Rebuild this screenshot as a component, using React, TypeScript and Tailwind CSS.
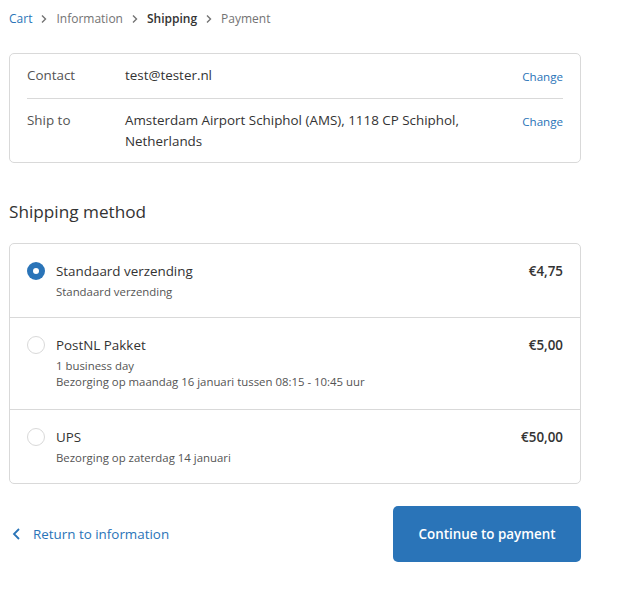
import React from 'react';

const methods = [
  { name: 'Standaard verzending', lines: ['Standaard verzending'], price: '€4,75', checked: true },
  { name: 'PostNL Pakket', lines: ['1 business day', 'Bezorging op maandag 16 januari tussen 08:15 - 10:45 uur'], price: '€5,00' },
  { name: 'UPS', lines: ['Bezorging op zaterdag 14 januari'], price: '€50,00' },
];

const Chevron = () => (
  <svg width="10" height="10" viewBox="0 0 10 10" className="mx-[7px]">
    <path d="M3 1.5 L6.5 5 L3 8.5" fill="none" stroke="#737373" strokeWidth="1.4" />
  </svg>
);

export default function App() {
  return (
    <div className="min-h-screen bg-white px-[9px] pt-[9px] text-[#333] font-['Open_Sans',sans-serif]">
      <div className="w-[572px]">
        {/* Breadcrumb */}
        <nav className="flex items-center text-[12px] h-[20px]">
          <span className="text-[#2a74b8]">Cart</span>
          <Chevron />
          <span className="text-[#737373]">Information</span>
          <Chevron />
          <span className="font-semibold text-[#333]">Shipping</span>
          <Chevron />
          <span className="text-[#737373]">Payment</span>
        </nav>

        {/* Review box */}
        <div className="mt-[24px] border border-[#d9d9d9] rounded-[5px] px-[17px]">
          <div className="flex items-start pt-[11px] pb-[11px] border-b border-[#d9d9d9] text-[13.4px] leading-[21px]">
            <div className="w-[98px] text-[#545454]">Contact</div>
            <div className="flex-1">test@tester.nl</div>
            <div className="text-[11.6px] text-[#2a74b8] pt-[1px]">Change</div>
          </div>
          <div className="flex items-start pt-[11px] pb-[10px] text-[13.4px] leading-[21px]">
            <div className="w-[98px] text-[#545454]">Ship to</div>
            <div className="flex-1 pr-[40px]">Amsterdam Airport Schiphol (AMS), 1118 CP Schiphol, Netherlands</div>
            <div className="text-[11.6px] text-[#2a74b8] pt-[1px]">Change</div>
          </div>
        </div>

        <h2 className="mt-[37px] text-[17.2px] leading-[24px] text-[#333]">Shipping method</h2>

        {/* Methods */}
        <div className="mt-[19px] border border-[#d9d9d9] rounded-[5px]">
          {methods.map((m, i) => (
            <div
              key={m.name}
              className={`flex items-start px-[17px] pt-[17px] ${i === 1 ? 'pb-[19px]' : 'pb-[17px]'} ${i > 0 ? 'border-t border-[#d9d9d9]' : ''}`}
            >
              {m.checked ? (
                <div className="mt-[1px] w-[18px] h-[18px] rounded-full bg-[#2a74b8] flex items-center justify-center shrink-0">
                  <div className="w-[6px] h-[6px] rounded-full bg-white" />
                </div>
              ) : (
                <div className="mt-[1px] w-[18px] h-[18px] rounded-full border border-[#d9d9d9] shrink-0" />
              )}
              <div className="flex-1 ml-[11px]">
                <div className="text-[13.4px] leading-[20px] text-[#333]">{m.name}</div>
                <div className="mt-[3px]">
                  {m.lines.map((l) => (
                    <div key={l} className="text-[11.4px] leading-[16px] text-[#545454]">{l}</div>
                  ))}
                </div>
              </div>
              <div className="text-[13.4px] leading-[20px] font-semibold text-[#333]">{m.price}</div>
            </div>
          ))}
        </div>

        {/* Footer */}
        <div className="mt-[22px] flex items-center justify-between">
          <div className="flex items-center text-[13.4px] text-[#2a74b8]">
            <svg width="12" height="14" viewBox="0 0 12 14" className="ml-[2px] mr-[10px]">
              <path d="M8 2 L3 7 L8 12" fill="none" stroke="#2a74b8" strokeWidth="1.8" />
            </svg>
            Return to information
          </div>
          <button className="w-[188px] h-[56px] rounded-[5px] bg-[#2a74b8] text-white text-[13.4px] font-semibold">
            Continue to payment
          </button>
        </div>
      </div>
    </div>
  );
}
